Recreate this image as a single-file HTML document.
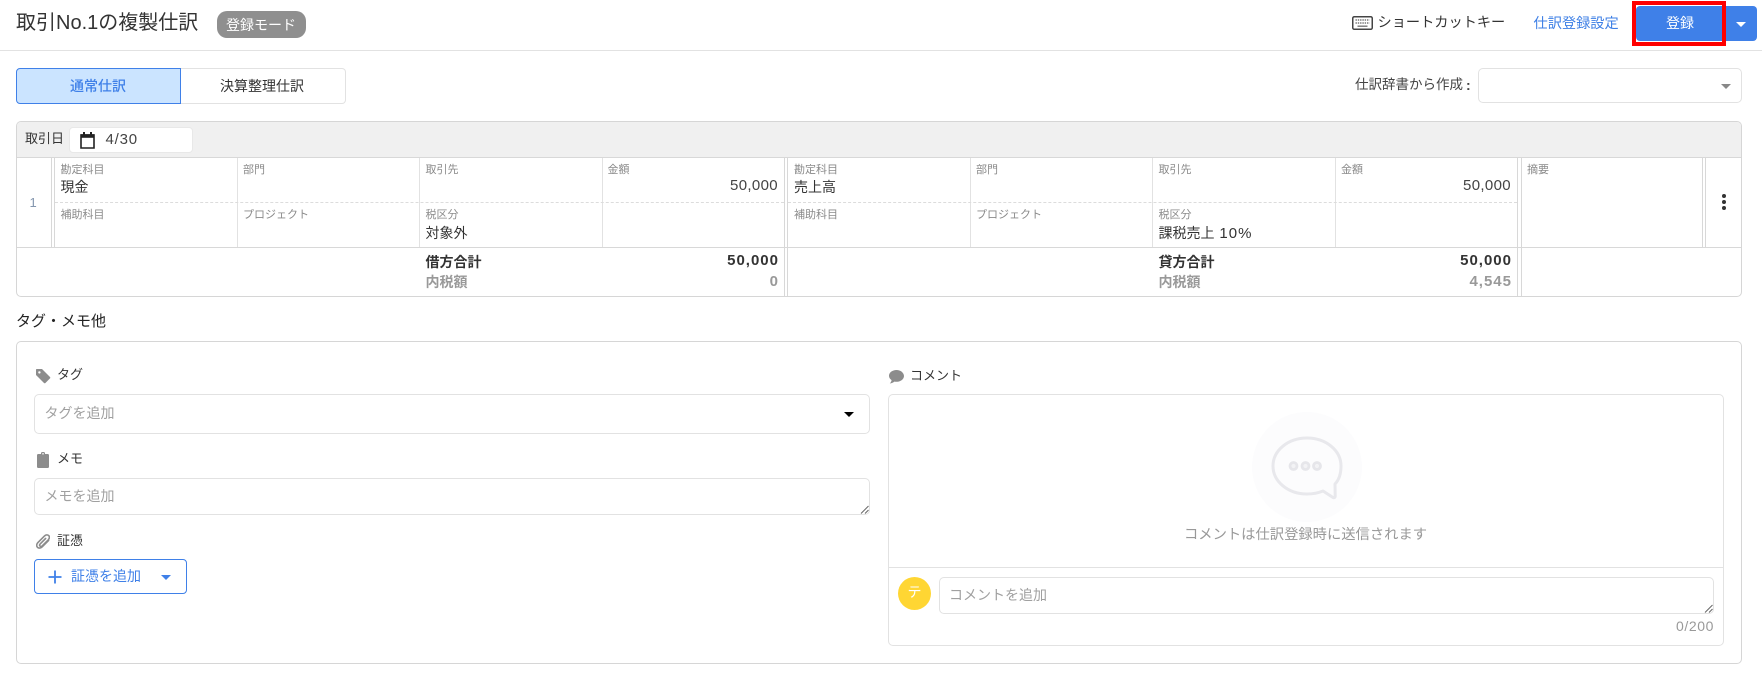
<!DOCTYPE html>
<html lang="ja">
<head>
<meta charset="utf-8">
<title>取引No.1の複製仕訳</title>
<style>
html,body{margin:0;padding:0;background:#fff;}
body{position:relative;width:1762px;height:677px;overflow:hidden;font-family:"Liberation Sans","Noto Sans CJK JP",sans-serif;color:#333;font-size:14px;}
.a{position:absolute;box-sizing:border-box;}
.t{position:absolute;white-space:nowrap;line-height:20px;height:20px;}
.r{text-align:right;}
.l{position:absolute;background:#d8d8d8;}
.lb{font-size:11px;color:#8a8a8a;}
.v{font-size:14px;color:#333;}
.num{font-size:15px;color:#444;letter-spacing:.35px;}
.b{font-weight:bold;}
.bn{font-weight:bold;letter-spacing:1px;font-size:15px;}
.g{color:#999;}
.box{position:absolute;box-sizing:border-box;border:1px solid #e2e2e2;border-radius:5px;background:#fff;}
.tri{position:absolute;width:0;height:0;border-left:5px solid transparent;border-right:5px solid transparent;border-top:5px solid #000;}
svg{position:absolute;display:block;}
</style>
</head>
<body>
<!-- header -->
<div class="t" style="left:16px;top:13px;font-size:20px;color:#333;">取引No.1の複製仕訳</div>
<div class="a" style="left:217px;top:11px;width:89px;height:27px;background:#8f8f8f;border-radius:10px;"></div>
<div class="t" style="left:226px;top:15px;font-size:14px;color:#fff;">登録モード</div>
<div class="l" style="left:0;top:50px;width:1762px;height:1px;background:#e2e2e2;"></div>

<svg style="left:1352px;top:16px;" width="21" height="14" viewBox="0 0 21 14"><rect x=".75" y=".75" width="19.5" height="12.5" rx="1.5" fill="#fff" stroke="#444" stroke-width="1.5"/><path d="M3.5 4h14M3.5 7h14" stroke="#777" stroke-width="1.4" stroke-dasharray="1.4 .9"/><path d="M5.5 10.2h10" stroke="#777" stroke-width="1.4"/></svg>
<div class="t" style="left:1377.5px;top:13px;font-size:14.2px;color:#333;">ショートカットキー</div>
<div class="t" style="left:1533.5px;top:14px;font-size:14.2px;color:#3d7fe6;">仕訳登録設定</div>
<div class="a" style="left:1636px;top:6px;width:121px;height:35px;background:#3f80e8;border-radius:4px;"></div>
<div class="a" style="left:1632px;top:1px;width:94px;height:45px;border:4px solid #f00;"></div>
<div class="t" style="left:1666px;top:13px;font-size:14px;color:#fff;">登録</div>
<div class="tri" style="left:1736px;top:22px;border-top-color:#fff;"></div>

<!-- tabs -->
<div class="a" style="left:16px;top:68px;width:165px;height:36px;background:#cbe4ff;border:1px solid #3f80e8;border-radius:4px 0 0 4px;"></div>
<div class="a" style="left:181px;top:68px;width:165px;height:36px;border:1px solid #e2e2e2;border-left:none;border-radius:0 4px 4px 0;"></div>
<div class="t" style="left:70px;top:76px;font-size:14px;color:#3f80e8;font-weight:500;">通常仕訳</div>
<div class="t" style="left:220px;top:76px;font-size:14px;color:#333;">決算整理仕訳</div>

<div class="t" style="left:1355px;top:75px;font-size:13.5px;color:#444;">仕訳辞書から作成</div>
<div class="t" style="left:1466px;top:75px;font-size:14px;color:#444;font-weight:bold;">:</div>
<div class="box" style="left:1478px;top:68px;width:264px;height:35px;"></div>
<div class="tri" style="left:1721px;top:84px;border-top-color:#888;"></div>

<!-- table -->
<div class="a" style="left:16px;top:121px;width:1726px;height:176px;border:1px solid #d6d6d6;border-radius:5px;"></div>
<div class="a" style="left:17px;top:122px;width:1724px;height:35px;background:#f0f0f0;border-radius:4px 4px 0 0;"></div>
<div class="l" style="left:17px;top:157px;width:1724px;height:1px;"></div>
<div class="l" style="left:17px;top:247px;width:1724px;height:1px;"></div>

<div class="t" style="left:25px;top:129px;font-size:13px;color:#333;">取引日</div>
<div class="a" style="left:69px;top:127px;width:124px;height:26px;background:#fff;border:1px solid #e8e8e8;border-radius:4px;"></div>
<svg style="left:80px;top:132px;" width="15" height="17" viewBox="0 0 15 17"><path d="M1 3h13v13H1z" fill="#fff" stroke="#222" stroke-width="1.6"/><rect x=".5" y="2.2" width="14" height="3.6" fill="#222"/><rect x="3" y="0" width="2" height="3.5" fill="#222"/><rect x="10" y="0" width="2" height="3.5" fill="#222"/></svg>
<div class="t" style="left:105.5px;top:130px;font-size:15px;color:#444;letter-spacing:.8px;">4/30</div>

<!-- vertical lines -->
<div class="l" style="left:51px;top:158px;width:1px;height:89px;"></div>
<div class="l" style="left:54px;top:158px;width:1px;height:89px;"></div>
<div class="l" style="left:237px;top:158px;width:1px;height:89px;background:#e2e2e2;"></div>
<div class="l" style="left:419px;top:158px;width:1px;height:89px;background:#e2e2e2;"></div>
<div class="l" style="left:602px;top:158px;width:1px;height:89px;background:#e2e2e2;"></div>
<div class="l" style="left:784px;top:158px;width:1px;height:138px;"></div>
<div class="l" style="left:787px;top:158px;width:1px;height:138px;"></div>
<div class="l" style="left:970px;top:158px;width:1px;height:89px;background:#e2e2e2;"></div>
<div class="l" style="left:1152px;top:158px;width:1px;height:89px;background:#e2e2e2;"></div>
<div class="l" style="left:1335px;top:158px;width:1px;height:89px;background:#e2e2e2;"></div>
<div class="l" style="left:1517px;top:158px;width:1px;height:138px;"></div>
<div class="l" style="left:1521px;top:158px;width:1px;height:138px;"></div>
<div class="l" style="left:1702px;top:158px;width:1px;height:89px;"></div>
<div class="l" style="left:1705px;top:158px;width:1px;height:89px;"></div>
<div class="a" style="left:55px;top:202px;width:729px;border-top:1px dashed #dcdcdc;"></div>
<div class="a" style="left:788px;top:202px;width:729px;border-top:1px dashed #dcdcdc;"></div>

<div class="t" style="left:29.5px;top:193px;font-size:13px;color:#8496ae;">1</div>

<div class="t lb" style="left:60.5px;top:160px;">勘定科目</div>
<div class="t lb" style="left:243px;top:160px;">部門</div>
<div class="t lb" style="left:425.5px;top:160px;">取引先</div>
<div class="t lb" style="left:607.5px;top:160px;">金額</div>
<div class="t lb" style="left:794px;top:160px;">勘定科目</div>
<div class="t lb" style="left:976px;top:160px;">部門</div>
<div class="t lb" style="left:1158.5px;top:160px;">取引先</div>
<div class="t lb" style="left:1341px;top:160px;">金額</div>
<div class="t lb" style="left:1527px;top:160px;">摘要</div>

<div class="t lb" style="left:60.5px;top:205px;">補助科目</div>
<div class="t lb" style="left:243px;top:205px;">プロジェクト</div>
<div class="t lb" style="left:425.5px;top:205px;">税区分</div>
<div class="t lb" style="left:794px;top:205px;">補助科目</div>
<div class="t lb" style="left:976px;top:205px;">プロジェクト</div>
<div class="t lb" style="left:1158.5px;top:205px;">税区分</div>

<div class="t v" style="left:60.5px;top:177px;">現金</div>
<div class="t v" style="left:794px;top:177px;">売上高</div>
<div class="t num r" style="left:678px;width:100px;top:176px;">50,000</div>
<div class="t num r" style="left:1411px;width:100px;top:176px;">50,000</div>
<div class="t v" style="left:425.5px;top:223px;">対象外</div>
<div class="t v" style="left:1158.5px;top:223px;">課税売上 <span style="font-size:15px;letter-spacing:1px;margin-left:1px;">10%</span></div>

<svg style="left:1721px;top:193px;" width="6" height="18" viewBox="0 0 6 18"><circle cx="3" cy="3" r="2" fill="#333"/><circle cx="3" cy="9" r="2" fill="#333"/><circle cx="3" cy="15" r="2" fill="#333"/></svg>

<div class="t b" style="left:425.5px;top:252px;color:#333;">借方合計</div>
<div class="t b g" style="left:425.5px;top:272px;">内税額</div>
<div class="t bn r" style="left:678px;width:101px;top:251px;color:#333;">50,000</div>
<div class="t bn r g" style="left:678px;width:101px;top:272px;">0</div>
<div class="t b" style="left:1158.5px;top:252px;color:#333;">貸方合計</div>
<div class="t b g" style="left:1158.5px;top:272px;">内税額</div>
<div class="t bn r" style="left:1411px;width:101px;top:251px;color:#333;">50,000</div>
<div class="t bn r g" style="left:1411px;width:101px;top:272px;">4,545</div>

<!-- tags & memo -->
<div class="t" style="left:16px;top:312px;font-size:15px;color:#222;">タグ・メモ他</div>
<div class="a" style="left:16px;top:341px;width:1726px;height:323px;border:1px solid #d6d6d6;border-radius:5px;"></div>

<svg style="left:35px;top:368px;" width="16" height="16" viewBox="0 0 16 16"><path d="M1 1.8C1 1.3 1.3 1 1.8 1H7l8 8c.4.4.4 1 0 1.4l-4.6 4.6c-.4.4-1 .4-1.4 0L1 7z" fill="#8c8c8c"/><circle cx="4.4" cy="4.4" r="1.2" fill="#fff"/></svg>
<div class="t" style="left:57px;top:365px;font-size:13px;color:#333;">タグ</div>
<div class="box" style="left:34px;top:394px;width:836px;height:40px;"></div>
<div class="t" style="left:44.5px;top:403px;font-size:14px;color:#a0a0a0;">タグを追加</div>
<div class="tri" style="left:844px;top:412px;"></div>

<svg style="left:37px;top:452px;" width="12" height="16" viewBox="0 0 12 16"><path d="M1.2 2H4V1.3C4 .6 4.6 0 5.2 0h1.6C7.4 0 8 .6 8 1.3V2h2.8c.7 0 1.2.5 1.2 1.2v11.6c0 .7-.5 1.2-1.2 1.2H1.2C.5 16 0 15.5 0 14.8V3.2C0 2.5.5 2 1.2 2z" fill="#8c8c8c"/><rect x="5.2" y="1.2" width="1.6" height="1.2" fill="#fff"/></svg>
<div class="t" style="left:57px;top:449px;font-size:13px;color:#333;">メモ</div>
<div class="box" style="left:34px;top:478px;width:836px;height:37px;"></div>
<div class="t" style="left:44.5px;top:486px;font-size:14px;color:#a0a0a0;">メモを追加</div>
<svg style="left:860px;top:505px;" width="9" height="9" viewBox="0 0 9 9"><path d="M1 8.5L8.5 1M5 8.5L8.5 5" stroke="#666" stroke-width="1"/></svg>

<svg style="left:36px;top:534px;" width="14" height="16" viewBox="0 0 14 16"><path d="M12.6 6.4L6.2 12.8C4.6 14.4 2.4 14.4 1.4 13.2C.3 12 .5 10 1.9 8.6L8.4 2.1C9.8 .7 11.6 .6 12.7 1.6C13.8 2.7 13.6 4.5 12.2 5.9L6.3 11.8C5.5 12.6 4.5 12.6 4 12.1C3.4 11.5 3.5 10.6 4.3 9.8L9.6 4.5" fill="none" stroke="#8c8c8c" stroke-width="1.6" stroke-linecap="round"/></svg>
<div class="t" style="left:57px;top:531px;font-size:13px;color:#333;">証憑</div>
<div class="a" style="left:34px;top:559px;width:153px;height:35px;border:1px solid #3f80e8;border-radius:4px;background:#fff;"></div>
<svg style="left:48px;top:570px;" width="14" height="14" viewBox="0 0 14 14"><path d="M7 .5v13M.5 7h13" stroke="#3f80e8" stroke-width="1.8"/></svg>
<div class="t" style="left:71px;top:566px;font-size:14px;color:#3f80e8;">証憑を追加</div>
<div class="tri" style="left:161px;top:575px;border-top-color:#3f80e8;"></div>

<!-- comment -->
<svg style="left:889px;top:370px;" width="15" height="14" viewBox="0 0 15 14"><path d="M7.5 0C3.4 0 0 2.5 0 5.7c0 1.8 1 3.3 2.6 4.4-.2 1.3-1 2.5-1.8 3.4 1.7-.2 3.3-.9 4.5-1.9.7.1 1.4.2 2.2.2 4.1 0 7.5-2.6 7.5-5.8S11.6 0 7.5 0z" fill="#8c8c8c"/></svg>
<div class="t" style="left:910px;top:366px;font-size:13px;color:#333;">コメント</div>
<div class="box" style="left:888px;top:394px;width:836px;height:252px;"></div>
<div class="l" style="left:889px;top:567px;width:834px;height:1px;background:#e2e2e2;"></div>

<svg style="left:1250px;top:410px;" width="114" height="114" viewBox="0 0 114 114"><circle cx="57" cy="57" r="55" fill="#fcfcfd"/><path d="M57 28c-19 0-34 12.5-34 28s15 28 34 28c6 0 11-.9 16-3l10 6.5c1 .7 2.2 0 2.2-1.2l-.2-12.3c4.8-5 6-11 6-18 0-15.5-15-28-34-28z" fill="none" stroke="#e8e8ec" stroke-width="3" stroke-linejoin="round"/><circle cx="43.5" cy="56" r="3.5" fill="#f3f3f5" stroke="#e6e6ea" stroke-width="2.8"/><circle cx="55.5" cy="56" r="3.5" fill="#f3f3f5" stroke="#e6e6ea" stroke-width="2.8"/><circle cx="67" cy="56" r="3.5" fill="#f3f3f5" stroke="#e6e6ea" stroke-width="2.8"/></svg>
<div class="t" style="left:1184px;top:525px;font-size:14.3px;color:#999;">コメントは仕訳登録時に送信されます</div>

<div class="a" style="left:898px;top:577px;width:33px;height:33px;background:#ffd633;border-radius:50%;"></div>
<div class="t" style="left:907.5px;top:582px;font-size:14px;color:#fff;">テ</div>
<div class="box" style="left:939px;top:577px;width:775px;height:37px;"></div>
<div class="t" style="left:949px;top:585px;font-size:14px;color:#a0a0a0;">コメントを追加</div>
<svg style="left:1704px;top:604px;" width="9" height="9" viewBox="0 0 9 9"><path d="M1 8.5L8.5 1M5 8.5L8.5 5" stroke="#666" stroke-width="1"/></svg>
<div class="t r" style="left:1614px;width:100px;top:616px;font-size:14px;color:#999;letter-spacing:.6px;">0/200</div>
</body>
</html>
